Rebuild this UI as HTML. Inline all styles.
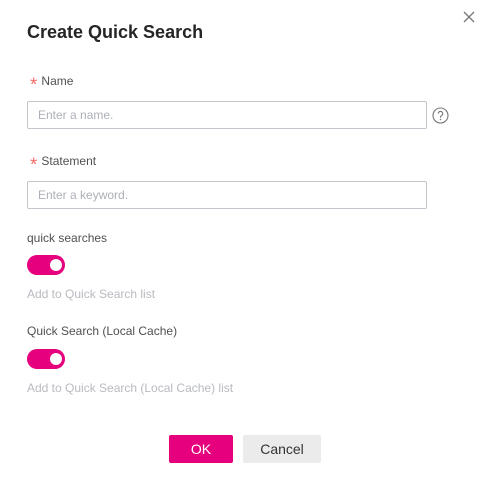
<!DOCTYPE html>
<html><head><meta charset="utf-8"><style>
*{margin:0;padding:0;box-sizing:border-box}
body{width:490px;height:490px;background:#fff;font-family:"Liberation Sans",Arial,sans-serif;position:relative;overflow:hidden;color:#333}
.a{position:absolute;white-space:nowrap}
.t{left:27px;top:22px;font-size:18px;font-weight:bold;color:#252525}
.l{font-size:12px;color:#505050}
.star{color:#f66f6a;font-size:19px;display:inline-block;vertical-align:-6px;margin-right:4px;line-height:12px}
.in{position:absolute;left:27px;width:400px;height:28px;border:1px solid #c2c5cc;border-radius:2px;font-size:12px;color:#adb0b8;padding:7px 10px;line-height:13px}
.tg{position:absolute;left:27px;width:38px;height:20px;border-radius:10px;background:#e6007e}
.tg:after{content:"";position:absolute;left:23px;top:4px;width:12px;height:12px;border-radius:50%;background:#fff}
.h{font-size:12px;color:#b8bac0}
.btn{position:absolute;top:435px;height:28px;border-radius:2px;font-size:14px;text-align:center;line-height:28px}
</style></head><body>
<div class="a t">Create Quick Search</div>
<svg class="a" style="left:463px;top:11px" width="12" height="12" viewBox="0 0 12 12"><path d="M1 1L11 11M11 1L1 11" stroke="#777" stroke-width="1.3" fill="none"/></svg>
<div class="a l" style="left:30px;top:74px"><span class="star">*</span>Name</div>
<div class="in" style="top:101px">Enter a name.</div>
<svg class="a" style="left:432px;top:107px" width="17" height="17" viewBox="0 0 17 17"><circle cx="8.5" cy="8.5" r="7.5" stroke="#777" stroke-width="1.1" fill="none"/><path d="M6.3 6.6a2.2 2.2 0 1 1 3.2 2c-.7.4-1 .8-1 1.6v.5" stroke="#777" stroke-width="1.1" fill="none"/><circle cx="8.5" cy="12.6" r=".7" fill="#777"/></svg>
<div class="a l" style="left:30px;top:154px"><span class="star">*</span>Statement</div>
<div class="in" style="top:181px">Enter a keyword.</div>
<div class="a l" style="left:27px;top:231px">quick searches</div>
<div class="tg" style="top:255px"></div>
<div class="a h" style="left:27px;top:287px">Add to Quick Search list</div>
<div class="a l" style="left:27px;top:324px">Quick Search (Local Cache)</div>
<div class="tg" style="top:349px"></div>
<div class="a h" style="left:27px;top:381px">Add to Quick Search (Local Cache) list</div>
<div class="btn" style="left:169px;width:64px;background:#e6007e;color:#fff">OK</div>
<div class="btn" style="left:243px;width:78px;background:#ebebeb;color:#333">Cancel</div>
</body></html>
